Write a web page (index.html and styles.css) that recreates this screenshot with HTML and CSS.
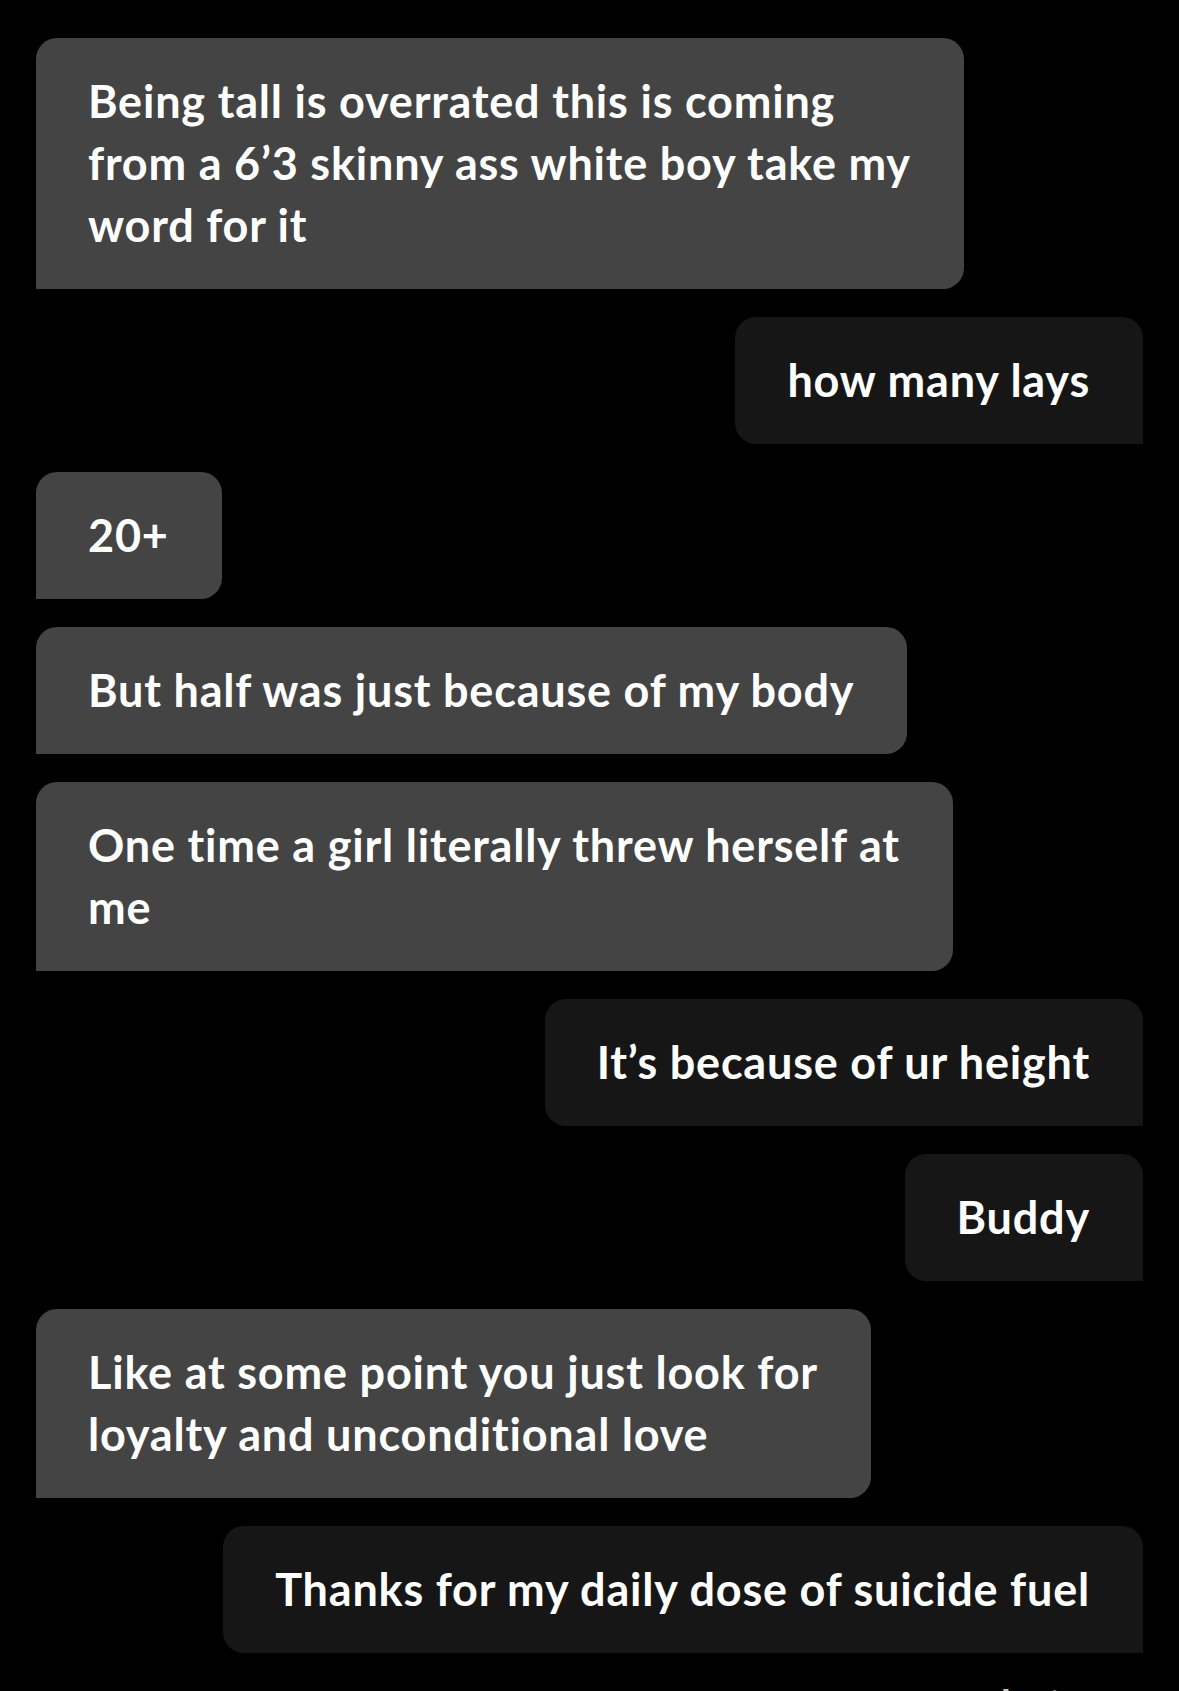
FILE: index.html
```html
<!DOCTYPE html>
<html lang="en">
<head>
  <meta charset="UTF-8">
  <meta name="viewport" content="width=device-width, initial-scale=1.0">
  <title>Chat</title>
  <link rel="stylesheet" href="styles.css">
</head>
<body>
  <div class="thread">
    <div class="msg in">Being tall is overrated this is coming<br>from a 6’3 skinny ass white boy take my<br>word for it</div>
    <div class="msg out">how many lays</div>
    <div class="msg in">20+</div>
    <div class="msg in">But half was just because of my body</div>
    <div class="msg in">One time a girl literally threw herself at<br>me</div>
    <div class="msg out">It’s because of ur height</div>
    <div class="msg out">Buddy</div>
    <div class="msg in">Like at some point you just look for<br>loyalty and unconditional love</div>
    <div class="msg out">Thanks for my daily dose of suicide fuel</div>
    <div class="status">Just now</div>
  </div>
</body>
</html>
```

FILE: styles.css
```css
html, body {
  margin: 0;
  padding: 0;
  background: #000;
  height: 100%;
  overflow: hidden;
}

body {
  font-family: "Lato", "Noto Sans", sans-serif;
  color: #fff;
}

.thread {
  display: flex;
  flex-direction: column;
  gap: 28px;
  padding: 38px 36px 0;
}

.msg {
  max-width: 1000px;
  padding: 32px 53px 33px 52px;
  font-size: 45px;
  font-weight: 700;
  letter-spacing: 0.8px;
  line-height: 62px;
  border-radius: 21px;
  white-space: nowrap;
}

/* received: grey, square bottom-left */
.msg.in {
  align-self: flex-start;
  background: #444444;
  border-bottom-left-radius: 0;
}

/* sent: near black, square bottom-right */
.msg.out {
  align-self: flex-end;
  background: #161616;
  border-bottom-right-radius: 0;
}

.status {
  align-self: flex-end;
  margin-top: -2px;
  font-size: 36px;
  font-weight: 700;
  letter-spacing: 0.6px;
  color: #c8c8c8;
}
```
